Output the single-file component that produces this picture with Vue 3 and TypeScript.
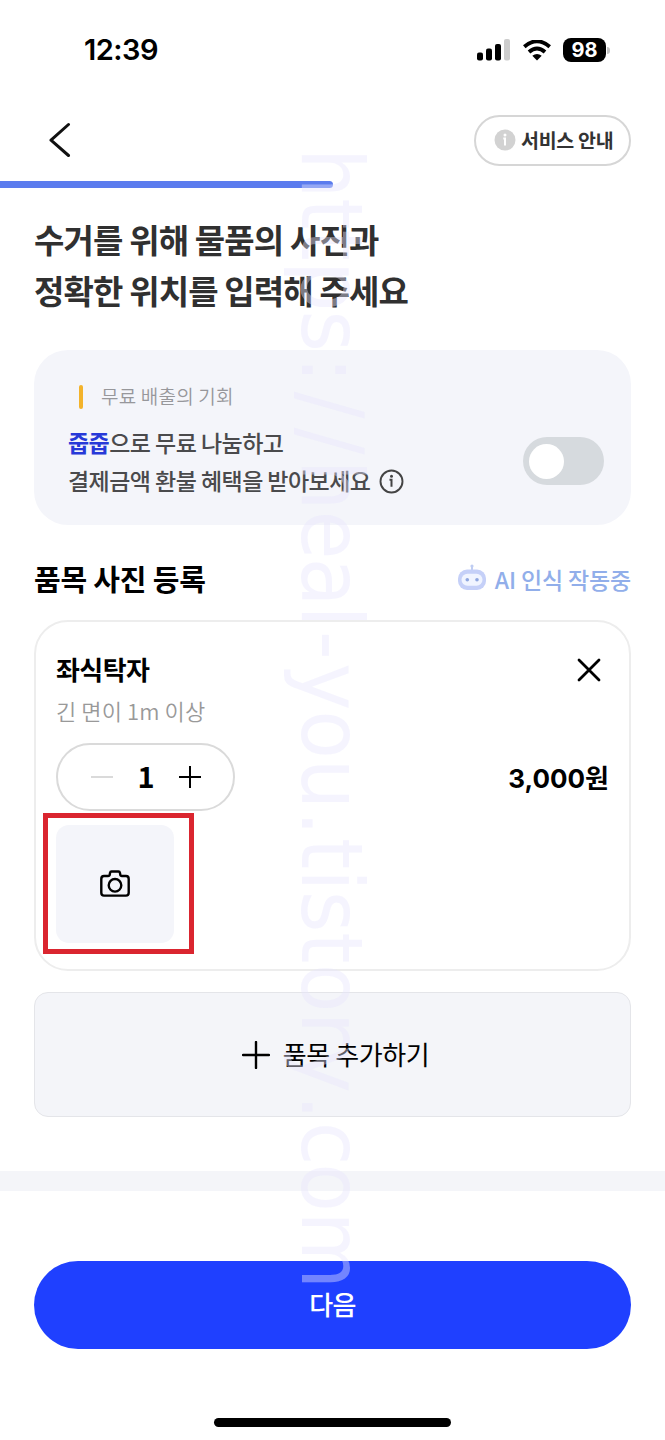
<script setup lang="ts">
import { ref } from 'vue'

const quantity = ref(1)
const sharing = ref(false)
const headline = ['수거를 위해 물품의 사진과', '정확한 위치를 입력해 주세요']
const signalBars = [
  { x: 0, height: 8 },
  { x: 9, height: 12 },
  { x: 18, height: 16.5 },
]

// Letter advances in em, with a nudge that centres the narrow punctuation.
const siteUrl = 'https://heal-you.tistory.com'
const advances: Record<string, number> = {
  h: 0.633, t: 0.394, p: 0.623, s: 0.521, ':': 0.454, '/': 0.454, e: 0.596, a: 0.601, l: 0.274,
  '-': 0.454, y: 0.592, o: 0.607, u: 0.633, '.': 0.364, i: 0.274, r: 0.427, c: 0.521, m: 0.973,
}
const nudges: Record<string, number> = { ':': 0.058, '/': 0.048, '-': 0.046, '.': 0.023 }
const markSize = 90
let pen = 0
const markX = [...siteUrl]
  .map((letter) => {
    const x = (pen + (nudges[letter] ?? 0)) * markSize
    pen += advances[letter] ?? 0.6
    return x.toFixed(1)
  })
  .join(' ')
</script>

<template>
  <main class="screen">
    <header class="status">
      <span class="time">12:39</span>
      <div class="indicators">
        <svg class="signal" width="34" height="22" viewBox="0 0 34 22">
          <rect v-for="bar in signalBars" :key="bar.x" :x="bar.x" :y="21.5 - bar.height" width="6" :height="bar.height" rx="2" />
          <rect x="27" y="0" width="6" height="21.5" rx="2" fill="#cdcdcd" />
        </svg>
        <svg class="wifi" width="28" height="21" viewBox="0 0 28 21">
          <path d="M1.3 6.8Q14-4.2 26.7 6.8M6 12Q14 5 22 12" fill="none" stroke="#000" stroke-width="3.9" />
          <path d="M9.3 15.8Q14 12 18.7 15.8L14 20.5Z" />
        </svg>
        <span class="battery">98</span>
        <i class="battery-tip"></i>
      </div>
    </header>

    <nav class="nav">
      <button class="back" aria-label="뒤로">
        <svg width="22" height="36" viewBox="0 0 22 36"><path d="M19.5 2.5 2 18.2 19.5 33.5" fill="none" stroke="#111" stroke-width="3" stroke-linecap="round" stroke-linejoin="round" /></svg>
      </button>
      <button class="guide">
        <svg width="22" height="22" viewBox="0 0 22 22"><circle cx="11" cy="11" r="10.5" fill="#d2d2d2" /><circle cx="11" cy="6" r="1.5" fill="#fff" /><path d="M9.3 9.5H11v7" fill="none" stroke="#fff" stroke-width="2" /></svg>
        <span>서비스 안내</span>
      </button>
    </nav>
    <div class="progress"><i></i></div>

    <h1 class="headline"><span v-for="line in headline" :key="line">{{ line }}</span></h1>

    <section class="benefit">
      <div class="copy">
        <p class="eyebrow"><i></i><span>무료 배출의 기회</span></p>
        <p class="line"><b>줍줍</b>으로 무료 나눔하고</p>
        <p class="line second"><span>결제금액 환불 혜택을 받아보세요</span>
          <svg width="25" height="25" viewBox="0 0 25 25"><circle cx="12.5" cy="12.5" r="11" fill="none" stroke="#444" stroke-width="1.9" /><circle cx="12.5" cy="7.2" r="1.5" fill="#444" /><path d="M10.5 10.8h2v7" fill="none" stroke="#444" stroke-width="2" /></svg>
        </p>
      </div>
      <button class="switch" :class="{ on: sharing }" aria-label="무료 나눔" @click="sharing = !sharing"><i></i></button>
    </section>

    <div class="section-head">
      <h2>품목 사진 등록</h2>
      <div class="ai">
        <svg width="30" height="27" viewBox="0 0 30 27">
          <path d="M15 1.5v5" stroke="#bfcdf2" stroke-width="2" />
          <circle cx="15" cy="2" r="1.6" fill="#bfcdf2" />
          <rect x="1" y="5.5" width="28" height="20.5" rx="9" fill="#c5d0f8" />
          <rect x="4.5" y="9.8" width="21" height="12" rx="6" fill="#f0f4ff" />
          <circle cx="10.3" cy="15.8" r="1.8" fill="#8ea6e0" /><circle cx="20" cy="15.8" r="1.8" fill="#8ea6e0" />
        </svg>
        <span>AI 인식 작동중</span>
      </div>
    </div>

    <article class="item">
      <div class="item-top">
        <h3>좌식탁자</h3>
        <button class="close" aria-label="삭제"><svg width="24" height="24" viewBox="0 0 24 24"><path d="M2 2 22 22M22 2 2 22" stroke="#000" stroke-width="2.8" stroke-linecap="round" /></svg></button>
      </div>
      <p class="size">긴 면이 1m 이상</p>
      <div class="item-row">
        <div class="stepper">
          <svg width="22" height="24" viewBox="0 0 22 24"><path d="M0 12H22" stroke="#d4d4d4" stroke-width="1.7" /></svg>
          <strong>{{ quantity }}</strong>
          <svg width="22" height="24" viewBox="0 0 22 24"><path d="M0 12H22M11 1V23" stroke="#000" stroke-width="2" /></svg>
        </div>
        <strong class="price">3,000원</strong>
      </div>
      <div class="photo-frame">
        <button class="photo" aria-label="사진 추가">
          <svg width="30" height="28" viewBox="0 0 30 28" fill="none" stroke="#000" stroke-width="2.4" stroke-linejoin="round">
            <path d="M4 6H8Q9.6 6 9.8 4.3L10 3Q10.3 1.5 11.5 1.5H18.5Q19.7 1.5 20 3L20.2 4.3Q20.4 6 22 6H26Q28.7 6 28.7 9V22.8Q28.7 25.6 26 25.6H4Q1.3 25.6 1.3 22.8V9Q1.3 6 4 6Z" />
            <circle cx="15" cy="15.3" r="6.3" />
          </svg>
        </button>
      </div>
    </article>

    <button class="add">
      <svg width="28" height="28" viewBox="0 0 28 28"><path d="M1 14H27M14 1V27" stroke="#000" stroke-width="2.4" stroke-linecap="round" /></svg>
      <span>품목 추가하기</span>
    </button>

    <div class="divider"></div>
    <button class="next"><span>다음</span></button>
    <div class="home-bar"></div>

    <svg class="watermark" width="100" height="1150" viewBox="0 0 100 1150">
      <text transform="translate(22 0) rotate(90) scale(0.883 0.95)" :x="markX" y="0">{{ siteUrl }}</text>
    </svg>
  </main>
</template>

<style>
body { margin: 0; background: #fff; }
</style>

<style scoped>
.screen {
  position: relative;
  box-sizing: border-box;
  width: 665px;
  height: 1440px;
  overflow: hidden;
  display: flex;
  flex-direction: column;
  background: #fff;
  color: #000;
  font-family: "Noto Sans CJK KR", sans-serif;
}
h1, h2, h3, p { margin: 0; }
button { padding: 0; border: 0; background: none; color: inherit; font: inherit; }
svg { display: block; flex: none; }
span, p, h2, h3 { white-space: nowrap; }

.status { height: 100px; flex: none; display: flex; justify-content: space-between; box-sizing: border-box; padding: 0 55px 0 84px; align-items: center; }
.time { font: 600 29px/34px Inter, sans-serif; letter-spacing: -0.5px; }
.indicators { display: flex; align-items: center; }
.wifi { margin-left: 12px; }
.battery { margin-left: 12px; width: 43px; height: 24px; border-radius: 8px; background: #000; color: #fff; font: 700 20px/24px Inter, sans-serif; text-align: center; }
.battery-tip { width: 3px; height: 7px; margin-left: 1px; border-radius: 0 3px 3px 0; background: #c4c4c4; }

.nav { height: 80px; flex: none; display: flex; justify-content: space-between; align-items: center; padding: 0 34px 0 49px; }
.guide { display: flex; align-items: center; gap: 5px; box-sizing: border-box; width: 157px; height: 51px; padding-left: 18px; border: 2px solid #d6d6d6; border-radius: 26px; color: #333; font-size: 19.5px; font-weight: 700; line-height: 28px; letter-spacing: -0.3px; }
.progress { height: 8px; flex: none; }
.progress i { display: block; width: 333px; height: 7px; margin-top: 1px; border-radius: 0 4px 4px 0; background: #5b7cee; }

.headline { display: flex; flex-direction: column; flex: none; height: 102px; margin: 26px 0 0 34px; color: #303030; font-size: 33px; font-weight: 700; line-height: 50.5px; letter-spacing: -0.85px; }

.benefit { flex: none; box-sizing: border-box; height: 175px; margin: 34px 34px 0; padding: 0 27px 0 34px; border-radius: 34px; background: #f4f5fa; display: flex; justify-content: space-between; }
.copy { padding-top: 32px; }
.eyebrow { display: flex; align-items: center; height: 30px; padding-left: 11px; color: #97979b; font-size: 19px; font-weight: 350; letter-spacing: 0.2px; }
.eyebrow i { width: 4px; height: 24px; margin-right: 18px; border-radius: 2px; background: #f3b32b; }
.eyebrow span { padding-bottom: 3px; }
.line { height: 38px; margin-top: 11px; color: #4a4a4c; font-size: 23px; font-weight: 500; line-height: 38px; letter-spacing: -0.55px; }
.line b { color: #2739d8; font-weight: 700; }
.second { display: flex; align-items: center; gap: 9px; margin-top: 0; }
.second svg { margin-top: 2px; }
.switch { width: 81px; height: 48px; margin-top: 87px; padding-left: 6px; border-radius: 24px; background: #d6dade; }
.switch i { display: block; width: 35px; height: 35px; border-radius: 50%; background: #fff; }
.switch.on { padding-left: 40px; background: #1f40ff; }

.section-head { flex: none; height: 95px; display: flex; justify-content: space-between; align-items: center; padding: 0 34px; margin-top: 6px; }
h2 { padding-bottom: 2px; font-size: 29px; font-weight: 700; line-height: 40px; letter-spacing: -0.2px; }
.ai { display: flex; align-items: center; gap: 8px; color: #91aeea; font-size: 23px; font-weight: 500; letter-spacing: -0.15px; }
.ai svg { margin-bottom: 2px; }

.item { flex: none; box-sizing: border-box; height: 351px; margin: -6px 34px 0; padding: 30px 20px 0; border: 2px solid #ededed; border-radius: 34px; }
.item-top { display: flex; justify-content: space-between; align-items: center; height: 36px; padding-right: 8px; }
h3 { padding-bottom: 2px; font-size: 26px; font-weight: 700; line-height: 36px; letter-spacing: -0.6px; }
.size { height: 46px; color: #999; font-size: 22px; font-weight: 350; line-height: 44px; letter-spacing: 0.1px; }
.item-row { display: flex; justify-content: space-between; align-items: center; height: 68px; margin-top: 9px; }
.stepper { display: flex; align-items: center; box-sizing: border-box; width: 179px; height: 68px; padding-left: 33px; border: 2px solid #dadada; border-radius: 34px; }
.stepper strong { width: 66px; padding-bottom: 4px; text-align: center; font-size: 29px; line-height: 34px; }
.price { padding-top: 3px; font: 700 26px/34px Inter, "Noto Sans CJK KR", sans-serif; }
.photo-frame { box-sizing: border-box; width: 151px; height: 141px; margin: 2px 0 0 -13px; padding: 7px 8px; border: 5px solid #da252f; }
.photo { display: flex; align-items: center; justify-content: center; width: 118px; height: 118px; border-radius: 13px; background: #f4f5fa; }

.add { flex: none; display: flex; align-items: center; justify-content: center; gap: 13px; box-sizing: border-box; height: 125px; margin: 21px 34px 0; padding-left: 6px; border: 1px solid #e4e5e9; border-radius: 14px; background: #f4f5f9; font-size: 26px; line-height: 36px; letter-spacing: -0.4px; }
.add span { padding-bottom: 1px; }
.next span { padding-bottom: 2px; }
.divider { flex: none; height: 20px; margin-top: 54px; background: #f4f5f9; }
.next { display: flex; align-items: center; justify-content: center; flex: none; height: 88px; margin: 70px 34px 0; border-radius: 44px; background: #1f40ff; color: #fff; font-size: 26px; font-weight: 500; line-height: 36px; letter-spacing: -0.6px; }
.home-bar { flex: none; width: 237px; height: 9px; margin: 69px auto 0; border-radius: 5px; background: #000; }

.watermark { position: absolute; left: 280px; top: 148px; overflow: visible; pointer-events: none; }
.watermark text { font: 90px "DejaVu Sans", sans-serif; fill: rgba(232, 228, 252, 0.42); }
</style>
